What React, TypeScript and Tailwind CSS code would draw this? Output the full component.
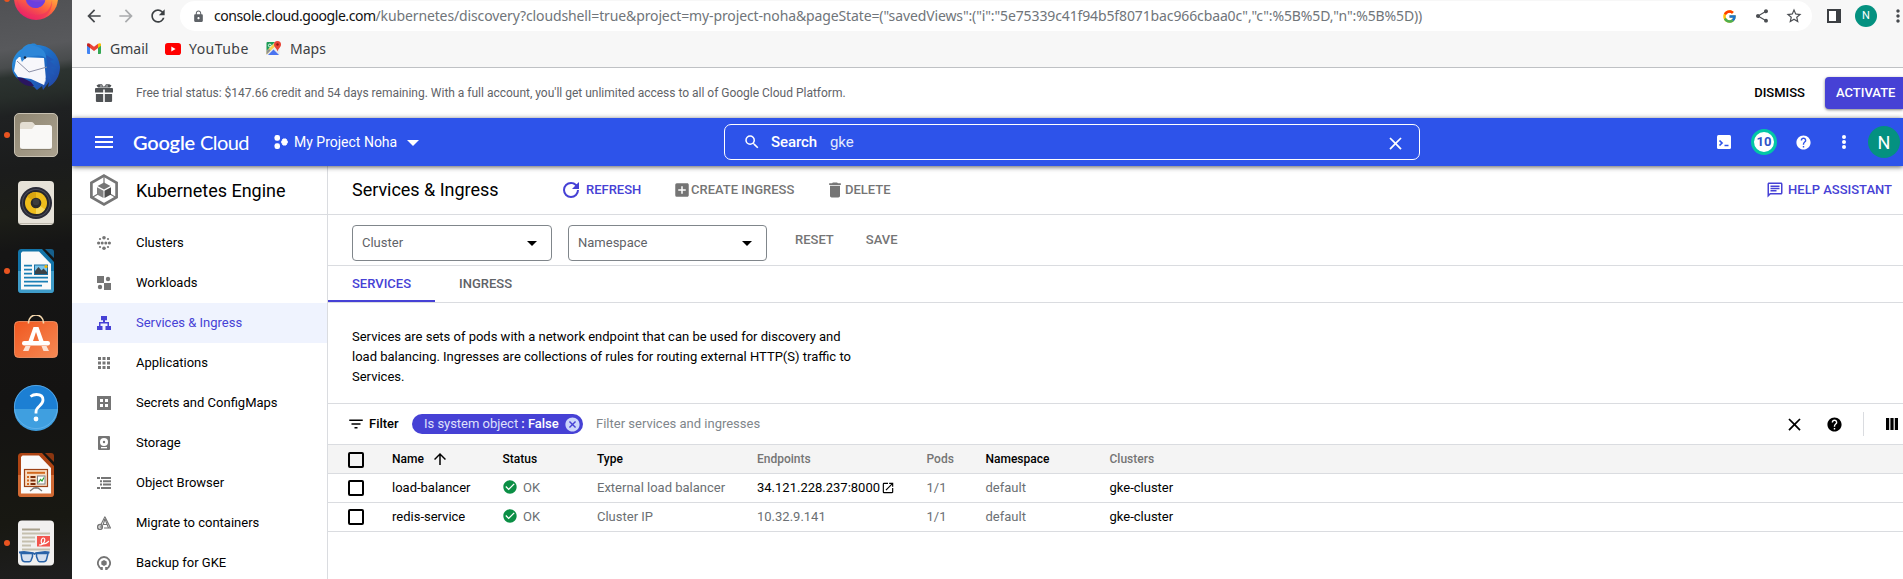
import React from 'react';
import type { ReactNode } from 'react';
import {
  MdAddBox, MdArrowBack, MdArrowForward, MdArrowUpward, MdCancel, MdCheckCircle, MdClose,
  MdDelete, MdFilterList, MdHelp, MdLock, MdMenu, MdMoreVert, MdOpenInNew, MdOutlineChat, MdRefresh,
  MdSearch, MdShare, MdStarBorder,
} from 'react-icons/md';
import { FcGoogle } from 'react-icons/fc';

/* ---------- Dock ---------- */

const Art = ({ children }: { children: ReactNode }) => (
  <svg width="48" height="48" viewBox="0 0 48 48" className="block">{children}</svg>
);

const Firefox = () => (
  <Art>
    <defs>
      <linearGradient id="ff" x1="0.8" y1="0" x2="0.3" y2="1">
        <stop offset="0.2" stopColor="#ffcf3f" />
        <stop offset="0.6" stopColor="#ff6a3c" />
        <stop offset="1" stopColor="#e5176f" />
      </linearGradient>
    </defs>
    <circle cx="24" cy="23" r="22" fill="url(#ff)" />
    <path d="M5 24c2 10 9 16 19 16s15-6 16-15c1 12-7 19-16 19S5 36 5 24z" fill="#f0305f" opacity="0.55" />
    <circle cx="23.500" cy="23" r="10" fill="#7a45d8" />
    <path d="M14 20c2 6 9 8 19 6-2 5-5 7-9.500 7-6 0-10-6-9.500-13z" fill="#6a3fe0" />
  </Art>
);

const Thunderbird = () => (
  <Art>
    <defs>
      <linearGradient id="tb" x1="0" y1="0" x2="1" y2="1">
        <stop offset="0" stopColor="#2f9be6" />
        <stop offset="0.5" stopColor="#1d6bc4" />
        <stop offset="1" stopColor="#2440a0" />
      </linearGradient>
    </defs>
    <path d="M19 1c3-1 5 0 6 1 12 0 22 9 23 22 0 9-5 17-12 20l1-5-6 8-1-4-5 4-3-3-9-5C5 37 0 31 0 24 0 16 4 9 10 6c2-3 5-5 9-5z" fill="url(#tb)" />
    <path d="M4 17l3-3 25 1 2 22-2 5-13-6-13-2-4-6z" fill="#f7f7fb" />
    <path d="M5 18l12 11 18-5" fill="none" stroke="#8d91a8" strokeWidth="1" />
    <path d="M10 8c3-5 8-7 12-5 8 1 12 6 12 12-4-3-8-3-13-2-5 0-8 2-11 6-2-4-2-8 0-11z" fill="#2d86d8" />
    <path d="M34 12l8 5-4 1 6 6-5 0 4 8-6-2 2 7-5-3-2 8c4-10 4-20 2-30z" fill="#2258b6" />
    <circle cx="13" cy="14.500" r="1.200" fill="#17243a" />
    <path d="M5 34l6 1 8 4 3 4C14 44 8 40 5 34z" fill="#2a1560" />
  </Art>
);

const Files = () => (
  <Art>
    <defs>
      <linearGradient id="fl" x1="0" y1="0" x2="1" y2="1">
        <stop offset="0" stopColor="#8f8672" />
        <stop offset="1" stopColor="#aba28f" />
      </linearGradient>
    </defs>
    <rect x="2.500" y="2.500" width="43" height="43" rx="4.500" fill="url(#fl)" stroke="#c8c1b2" />
    <path d="M8 14a3 3 0 013-3h8.500a3 3 0 012 1l2 2.500H36v9H8z" fill="#e3ddd2" />
    <path d="M8 18h12l3-4h14.500a2.500 2.500 0 012.500 2.500v19a2.500 2.500 0 01-2.500 2.500h-27A2.500 2.500 0 018 35.500z" fill="#f9f8f6" />
    <path d="M9 38.400h30" stroke="#7d7564" strokeWidth="0.800" />
  </Art>
);

const Speaker = () => (
  <Art>
    <rect x="6" y="2" width="36" height="44" rx="4" fill="#e6e2d8" />
    <path d="M7 44.500h34" stroke="#bdb8ac" strokeWidth="1" />
    <circle cx="24" cy="24" r="16" fill="#292a36" />
    <circle cx="24" cy="24" r="14" fill="#4b4c59" />
    <circle cx="24" cy="24" r="13" fill="#26262c" />
    <circle cx="24" cy="24" r="11" fill="#efbd1c" />
    <path d="M24 24L15 17.500A11 11 0 0124 13z" fill="#d9a510" />
    <path d="M24 24l9 6.500A11 11 0 0124 35z" fill="#f8d95c" />
    <circle cx="24" cy="24" r="5.300" fill="#2b2b2b" />
    <circle cx="24" cy="23" r="3.200" fill="#3d3d3d" />
  </Art>
);

const Writer = () => (
  <Art>
    <path d="M9.500 2H30l12 13v27.500a3.500 3.500 0 01-3.500 3.500h-29A3.500 3.500 0 016 42.500v-37A3.500 3.500 0 019.500 2z" fill="#1374a8" />
    <path d="M6 24h36v18.500a3.500 3.500 0 01-3.500 3.500h-29A3.500 3.500 0 016 42.500z" fill="#3f9cc9" />
    <path d="M10.500 4.500H27L39 17v25.500H9V6z" fill="#fafafa" />
    <path d="M33 2h6a3 3 0 013 3v6z" fill="#16608c" />
    <path d="M12 18.700h8M12 22.700h8M12 26.700h8M12 30.700h24M12 34.700h24M12 38.700h18" stroke="#1a7fb5" strokeWidth="1.800" />
    <rect x="22.500" y="18" width="13" height="9.500" fill="#79c4ea" stroke="#1a6f9f" strokeWidth="1" />
    <path d="M23 27v-3l3.500-4 3 3.500 2-2 3.500 3.500v2z" fill="#3c4247" />
    <circle cx="34" cy="19.500" r="1.600" fill="#f4b400" />
  </Art>
);

const Software = () => (
  <Art>
    <defs>
      <linearGradient id="sw" x1="0" y1="0" x2="1" y2="1">
        <stop offset="0" stopColor="#f0571f" />
        <stop offset="1" stopColor="#f58a55" />
      </linearGradient>
    </defs>
    <rect x="2.500" y="6.500" width="43" height="36" rx="4" fill="url(#sw)" stroke="#fb9a6c" strokeWidth="0.800" />
    <path d="M16.500 8.500v-1a7.500 7.500 0 0115 0v1" fill="none" stroke="#f6d9ae" strokeWidth="1.600" />
    <path d="M21.500 12h5l5 14h-4.500L24 17l-3 9h-4.500z" fill="#fff" />
    <rect x="10" y="26" width="28" height="4.500" rx="2.200" fill="#fff" />
    <path d="M13.500 31h5L16.500 36H11zM29.500 31h5l2.500 5h-5.500z" fill="#fbe3d6" />
  </Art>
);

const HelpDock = () => (
  <Art>
    <circle cx="24" cy="24" r="22" fill="#1c7fd3" />
    <path d="M2 26a22 22 0 0044 0z" fill="#3f9fe0" />
    <circle cx="24" cy="24" r="21.600" fill="none" stroke="#6bb8ee" strokeWidth="0.700" />
    <path d="M18.500 13.500c2-1.500 4-2 6-2 4 0 6.500 2 6.500 5.500 0 6-7 6-7 12v1.500" fill="none" stroke="#fff" strokeWidth="2.800" />
    <circle cx="24" cy="36" r="2.400" fill="#fff" />
  </Art>
);

const Impress = () => (
  <Art>
    <path d="M9.500 2H30l12 13v27.500a3.500 3.500 0 01-3.500 3.500h-29A3.500 3.500 0 016 42.500v-37A3.500 3.500 0 019.500 2z" fill="#ae4413" />
    <path d="M6 24h36v18.500a3.500 3.500 0 01-3.500 3.500h-29A3.500 3.500 0 016 42.500z" fill="#d06a34" />
    <path d="M10.500 4.500H27L39 17v25.500H9V6z" fill="#fafafa" />
    <path d="M33 2h6a3 3 0 013 3v6z" fill="#8a3610" />
    <rect x="12.500" y="18.500" width="23" height="17" fill="#f8ddc2" stroke="#9c4216" strokeWidth="1.200" />
    <path d="M15 21.800h18" stroke="#d2691e" strokeWidth="2" />
    <path d="M15 26h2M15 29.500h2M15 33h2" stroke="#d2691e" strokeWidth="2" />
    <path d="M18.500 26h5M18.500 29.500h5M18.500 33h5" stroke="#7a2c0a" strokeWidth="2" />
    <rect x="25.500" y="25" width="7.500" height="8" fill="#fff" stroke="#7c8288" strokeWidth="1" />
    <path d="M26.500 31.500l2-3 1.500 1.500 2-3.500" fill="none" stroke="#2fa32f" strokeWidth="1.200" />
    <path d="M24 36v1.500M18 40l4-3h4l4 3" fill="none" stroke="#777" strokeWidth="1.300" />
  </Art>
);

const Reader = () => (
  <Art>
    <rect x="6" y="1.500" width="36" height="45" rx="4" fill="#f1f0ef" />
    <path d="M10 10.500h18" stroke="#a8a18d" strokeWidth="2" />
    <path d="M10 14.500h28M10 18.500h13M10 22.500h13M10 26.500h9M10 30.500h28" stroke="#c5bfae" strokeWidth="2" />
    <rect x="25" y="17" width="13" height="10.500" fill="#f2554d" />
    <path d="M27 26c6 0 7-7 4.500-7s-3.500 6 0 6 4-2 5.500-3" fill="none" stroke="#fff" strokeWidth="1.200" />
    <path d="M7 33.500l5-.5 9 1 1.500 1 1.500-1 9-1 4.500.5" fill="none" stroke="#2a63a8" strokeWidth="1.800" />
    <path d="M9 34.500h11.500v3l-1.500 4a2 2 0 01-2 1.200h-4a3 3 0 01-3-2.200zM24.500 34.500H36l-1.500 6a3 3 0 01-3 2.200H28a2 2 0 01-2-1.200l-1.500-4z" fill="#d5e0ef" stroke="#2a63a8" strokeWidth="1.500" />
  </Art>
);

const dock: { Icon: () => ReactNode; running?: boolean }[] = [
  { Icon: Firefox, running: true },
  { Icon: Thunderbird },
  { Icon: Files, running: true },
  { Icon: Speaker },
  { Icon: Writer, running: true },
  { Icon: Software },
  { Icon: HelpDock },
  { Icon: Impress },
  { Icon: Reader, running: true },
];

const Dock = () => (
  <aside className="h-[579px] w-[72px] shrink-0 overflow-hidden bg-[linear-gradient(172deg,#505154_0px,#58595c_50px,#494c4d_68px,#2c3330_78px,#272d2a_98px,#1f2122_116px,#1b1c1c_170px,#1d1e18_215px,#151515_250px,#141312_400px,#181812_520px,#1e1e1e_579px)]">
    <div className="-mt-[35px] flex flex-col">
      {dock.map(({ Icon, running }, i) => (
        <div key={i} className="flex h-[68px] shrink-0 items-center">
          <span className="flex w-3 justify-center pl-0.5">
            {running && <span className="size-1.5 rounded-full bg-[#e95420]" />}
          </span>
          <Icon />
        </div>
      ))}
    </div>
  </aside>
);

/* ---------- Browser chrome ---------- */

const GmailIcon = () => (
  <svg width="14" height="11" viewBox="0 0 14 11">
    <path d="M0 1.500V10a1 1 0 001 1h2V4z" fill="#4285f4" />
    <path d="M14 1.500V10a1 1 0 01-1 1h-2V4z" fill="#34a853" />
    <path d="M11 0.800V5l3-2.200V1.500C14 0 12.300-.3 11 .8z" fill="#fbbc04" />
    <path d="M3 5V0.800l4 3 4-3V5L7 8z" fill="#ea4335" />
    <path d="M0 1.500v1.300L3 5V0.800C1.700-.3 0 0 0 1.500z" fill="#c5221f" />
  </svg>
);

const YouTubeIcon = () => (
  <svg width="16" height="12" viewBox="0 0 16 12">
    <rect width="16" height="12" rx="2.800" fill="#f00" />
    <path d="M6.300 3.500v5L10.600 6z" fill="#fff" />
  </svg>
);

const MapsIcon = () => (
  <svg width="16" height="15" viewBox="0 0 16 15">
    <rect x="0.500" y="1" width="13" height="13" rx="1" fill="#e8eaed" />
    <path d="M.5 2a1 1 0 011-1H9L.5 10z" fill="#1e9d57" />
    <path d="M2 14l5.500-5.500L13 14z" fill="#4a74f0" />
    <path d="M.5 10L8 2.500l2 2L.5 13.500z" fill="#fbd04b" />
    <path d="M.5 13.500V10L3 8l1.500 1.500z" fill="#8b9097" />
    <path d="M11.500 0a3.500 3.500 0 013.500 3.500c0 2.500-2.500 3.500-3.500 7-1-3.500-3.500-4.500-3.500-7A3.500 3.500 0 0111.500 0z" fill="#ea4335" />
    <circle cx="11.500" cy="3.500" r="1.200" fill="#8c1a12" />
    <circle cx="3.800" cy="4.500" r="1.400" fill="none" stroke="#fff" strokeWidth="0.900" />
  </svg>
);

const Chrome = () => (
  <div className="h-[68px] border-b border-[#bfc1c4] bg-[#f7f7f7] font-['Noto_Sans',sans-serif]">
    <div className="flex h-8 items-center pl-3">
      <MdArrowBack size={20} className="shrink-0 text-[#46494d]" />
      <MdArrowForward size={20} className="ml-3 shrink-0 text-[#a9abad]" />
      <MdRefresh size={20} className="ml-3 shrink-0 text-[#3c4043]" />
      <div className="ml-3 flex h-[30px] w-[1632px] shrink-0 items-center rounded-full bg-white pl-3">
        <MdLock size={13} className="text-[#5f6368]" />
        <div className="ml-[9px] flex whitespace-pre pb-px text-[14px] leading-none">
          <span className="w-[161.500px] tracking-[-0.42px] text-[#111]">console.cloud.google.com</span>
          <span className="tracking-[-0.123px] text-[#70757a]">
            {'/kubernetes/discovery?cloudshell=true&project=my-project-noha&pageState=("savedViews":("i":"5e75339c41f94b5f8071bac966cbaa0c","c":%5B%5D,"n":%5B%5D))'}
          </span>
        </div>
        <div className="ml-auto flex items-center pr-[9px]">
          <FcGoogle size={15} />
          <MdShare size={16} className="ml-[17px] text-[#4b4e52]" />
          <MdStarBorder size={18} className="ml-[15px] text-[#4b4e52]" />
        </div>
      </div>
      <div className="ml-[15px] h-3.5 w-3.5 shrink-0 border-2 border-r-[5px] border-[#3c3f43] bg-white" />
      <div className="ml-[14px] flex size-[22px] shrink-0 items-center justify-center rounded-full bg-[#049180] font-[Roboto] text-[11px] text-white">N</div>
      <MdMoreVert size={20} className="ml-[11px] shrink-0 text-[#46494d]" />
    </div>
    <div className="flex h-[33px] items-center pl-[15px] text-[14px] text-[#3c4043]">
      <GmailIcon />
      <span className="ml-[9px] w-[55px]">Gmail</span>
      <YouTubeIcon />
      <span className="ml-2 w-[77px] tracking-[0.45px]">YouTube</span>
      <MapsIcon />
      <span className="ml-2">Maps</span>
    </div>
  </div>
);

/* ---------- Console header ---------- */

const GiftIcon = () => (
  <svg width="18" height="18" viewBox="0 0 18 18" fill="#4f5255">
    <path d="M1 4h16a1 1 0 011 1v3.500h-8.200V5.500H8.200v3H0V5a1 1 0 011-1zM.9 10h7.300v8H2a1.100 1.100 0 01-1.100-1.100zM9.800 10h7.300v6.900A1.100 1.100 0 0116 18H9.800z" />
    <path d="M8.900 2.900L7 .2H3.600L1.500 1.400 3 3.600h12l1.500-2.200L14.400.2H11z" />
    <path d="M5 2h2.500M10.500 2H13" stroke="#fff" strokeWidth="0.700" />
  </svg>
);

const Banner = () => (
  <div className="flex h-[50px] items-center pl-[23px]">
    <GiftIcon />
    <span className="ml-[23px] text-[12px] tracking-[-0.008px] text-[#5f6368]">
      Free trial status: $147.66 credit and 54 days remaining. With a full account, you'll get unlimited access to all of Google Cloud Platform.
    </span>
    <span className="ml-auto text-[13px] font-medium text-black">DISMISS</span>
    <div className="ml-5 flex h-8 w-[78px] shrink-0 items-center rounded-l bg-[#4641d5] pl-[11px] text-[13px] font-medium text-white shadow-[0_1px_3px_rgba(0,0,0,0.5)]">
      ACTIVATE
    </div>
  </div>
);

const Header = () => (
  <header className="relative z-10 flex h-12 items-center bg-[#2d53ea] text-white shadow-[0_1px_5px_rgba(0,0,0,0.65)]">
    <MdMenu size={24} className="ml-5 shrink-0" />
    <div className="ml-[17px] flex w-[141px] gap-[5px] font-['Lato',sans-serif] text-[20px] leading-none">
      <span className="font-semibold tracking-[-0.2px]">Google</span>
      <span className="tracking-[-0.55px]">Cloud</span>
    </div>
    <svg width="14" height="16" viewBox="0 0 14 16" className="shrink-0" fill="#fff">
      <rect x="0.500" y="1" width="5.500" height="5.800" rx="2.200" />
      <rect x="0.500" y="9.200" width="5.500" height="5.800" rx="2.200" />
      <path d="M9 5h3l1.500 3-1.500 3H9L7.500 8z" stroke="#fff" strokeWidth="1" strokeLinejoin="round" />
    </svg>
    <span className="ml-[6px] w-[113px] text-[14px]">My Project Noha</span>
    <svg width="12" height="6" viewBox="0 0 12 6" fill="#fff" className="mt-0.5"><path d="M0 0h12L6 6z" /></svg>
    <div className="ml-[305px] flex h-9 w-[696px] shrink-0 items-center rounded-[7px] border border-white pl-[18px]">
      <MdSearch size={18} />
      <span className="ml-2.5 text-[15px] font-medium tracking-[-0.1px]">Search</span>
      <span className="ml-[13px] text-[15px] text-[#e4eafd]">gke</span>
      <MdClose size={21} className="ml-auto mr-[13px] mt-0.5" />
    </div>
    <div className="ml-[297px] flex items-center">
      <svg width="14" height="14" viewBox="0 0 14 14">
        <rect width="14" height="14" rx="1.500" fill="#fff" />
        <path d="M2.500 5.500L5 8l-2.500 2.500M7.500 10.500h4" fill="none" stroke="#2d53ea" strokeWidth="1.700" />
      </svg>
      <span className="ml-5 flex size-[26px] items-center justify-center rounded-full border-[3px] border-[#03c7a6] bg-white text-[13px] font-bold text-[#2d53c8]">10</span>
      <MdHelp size={17} className="ml-[18px]" />
      <svg width="4" height="14" viewBox="0 0 4 14" fill="#fff" className="ml-[30px]">
        <circle cx="2" cy="2" r="2" /><circle cx="2" cy="7" r="2" /><circle cx="2" cy="12" r="2" />
      </svg>
      <span className="ml-[22px] flex size-8 items-center justify-center rounded-full bg-[#049180] text-[18px]">N</span>
    </div>
  </header>
);

/* ---------- Sidebar ---------- */

const Nav14 = ({ children }: { children: ReactNode }) => (
  <svg width="14" height="14" viewBox="0 0 14 14" fill="currentColor">{children}</svg>
);

const nav: { label: string; icon: ReactNode; active?: boolean }[] = [
  {
    label: 'Clusters',
    icon: (
      <Nav14>
        <circle cx="7" cy="1.800" r="1.800" /><circle cx="7" cy="12.200" r="1.800" />
        <circle cx="1.600" cy="7" r="1.600" /><circle cx="12.400" cy="7" r="1.600" />
        <circle cx="5.200" cy="7" r="1.500" /><circle cx="8.800" cy="7" r="1.500" />
        <circle cx="3" cy="3" r="1.100" /><circle cx="11" cy="3" r="1.100" /><circle cx="3" cy="11" r="1.100" /><circle cx="11" cy="11" r="1.100" />
      </Nav14>
    ),
  },
  {
    label: 'Workloads',
    icon: <Nav14><path d="M0 0h7v7H0zM7 7h7v7H7z" /><circle cx="11" cy="3" r="2.200" /><circle cx="3" cy="11" r="2.200" /></Nav14>,
  },
  {
    label: 'Services & Ingress',
    active: true,
    icon: <Nav14><path d="M4 0h6v4.200H8V6h4v4h2v4H8.500v-4h2V7.500h-7V10h2v4H0v-4h2V6h4V4.200H4z" /></Nav14>,
  },
  {
    label: 'Applications',
    icon: <Nav14><path d="M1 1h3v3H1zM5.500 1h3v3h-3zM10 1h3v3h-3zM1 5.500h3v3H1zM5.500 5.500h3v3h-3zM10 5.500h3v3h-3zM1 10h3v3H1zM5.500 10h3v3h-3zM10 10h3v3h-3z" /></Nav14>,
  },
  {
    label: 'Secrets and ConfigMaps',
    icon: <Nav14><path fillRule="evenodd" d="M0 0h14v14H0zM3 3v3h3V3zM8 3v3h3V3zM3 8v3h3V8zM8 8v3h3V8z" /></Nav14>,
  },
  {
    label: 'Storage',
    icon: (
      <Nav14>
        <rect x="1" y="0" width="12" height="14" rx="1" />
        <circle cx="7" cy="6" r="4" fill="#fff" /><circle cx="7" cy="6" r="1.200" />
        <path d="M4 11h6v1.300H4z" fill="#fff" />
      </Nav14>
    ),
  },
  {
    label: 'Object Browser',
    icon: <Nav14><path d="M0 1h3v2H0zM4 1h10v2H4zM3 4.300h2v2H3zM6 4.300h8v2H6zM3 7.600h2v2H3zM6 7.600h8v2H6zM0 11h3v2H0zM4 11h10v2H4z" /></Nav14>,
  },
  {
    label: 'Migrate to containers',
    icon: (
      <Nav14>
        <path d="M8 1L13.500 12H7" fill="none" stroke="currentColor" strokeWidth="1.200" />
        <path d="M8 .5L4 8.500M8 3l-2 6M8 3l3.500 9M6.500 8.500h4" fill="none" stroke="currentColor" strokeWidth="1.100" />
        <circle cx="3" cy="11" r="2.400" fill="none" stroke="currentColor" strokeWidth="1.500" />
        <path d="M2.500 11h3" fill="none" stroke="currentColor" strokeWidth="1.300" />
      </Nav14>
    ),
  },
  {
    label: 'Backup for GKE',
    icon: (
      <Nav14>
        <path d="M4.800 12.800A6.100 6.100 0 119.200 12.800" fill="none" stroke="currentColor" strokeWidth="1.800" />
        <path d="M3.500 11h2.300v3H3.500zM8.200 11h2.300v3H8.200z" />
        <path d="M7 4l2.700 1.500v3L7 10 4.300 8.500v-3z" />
      </Nav14>
    ),
  },
];

const KubernetesIcon = () => (
  <svg width="28" height="32" viewBox="0 0 28 32">
    <path d="M14 1.600l12.600 7.200v14.400L14 30.400 1.400 23.200V8.800z" fill="none" stroke="#757575" strokeWidth="2.700" />
    <path d="M14 2v7M2 23.500l6-3.500M26 23.500L20 20" stroke="#757575" strokeWidth="1.200" />
    <path d="M14 8.500l6.500 3.600L14 15.600l-6.500-3.500z" fill="#757575" />
    <path d="M7 13.200l6.500 3.500v7.300L7 20.500z" fill="#808080" />
    <path d="M21 13.200l-6.500 3.500v7.300l6.500-3.500z" fill="#4f4f4f" />
  </svg>
);

const Sidebar = () => (
  <nav className="w-64 shrink-0 border-r border-[#dadce0]">
    <div className="flex h-[49px] items-center border-b border-[#dadce0] pl-[18px]">
      <KubernetesIcon />
      <span className="ml-[18px] text-[18px] text-black">Kubernetes Engine</span>
    </div>
    <div className="pt-2">
      {nav.map((n) => (
        <div
          key={n.label}
          className={
            n.active
              ? 'flex h-10 items-center bg-[#eff3fe] pl-[25px] text-[#4641d5]'
              : 'flex h-10 items-center pl-[25px] text-[#757575]'
          }
        >
          {n.icon}
          <span className={n.active ? 'ml-[25px] text-[13px]' : 'ml-[25px] text-[13px] text-black'}>{n.label}</span>
        </div>
      ))}
    </div>
  </nav>
);

/* ---------- Main ---------- */

const Select = ({ label }: { label: string }) => (
  <div className="flex h-9 items-center justify-between rounded border border-[#80868b] pl-[9px] pr-[14px] text-[13px] text-[#5f6368]">
    {label}
    <svg width="10" height="5" viewBox="0 0 10 5" className="text-black" fill="currentColor"><path d="M0 0h10L5 5z" /></svg>
  </div>
);

const Checkbox = () => <span className="block size-4 rounded-[2px] border-2 border-black" />;

const services = [
  { name: 'load-balancer', type: 'External load balancer', endpoint: '34.121.228.237:8000', link: true },
  { name: 'redis-service', type: 'Cluster IP', endpoint: '10.32.9.141', link: false },
];

const Main = () => (
  <main className="min-w-0 flex-1">
    <div className="flex h-[49px] items-center border-b border-[#dadce0] pl-6 text-[13px] font-medium text-[#757575]">
      <h1 className="w-[211px] pb-px text-[18px] font-normal tracking-[-0.03px] text-black">Services &amp; Ingress</h1>
      <span className="flex w-[110px] items-center text-[#4641d5]">
        <svg width="16" height="16" viewBox="4 4 16 16" fill="currentColor">
          <path d="M17.650 6.350A7.960 7.960 0 0012 4a8 8 0 108 8h-2a6 6 0 11-6-6c1.660 0 3.140.69 4.220 1.780L13 11h7V4z" />
        </svg>
        <span className="ml-[7px]">REFRESH</span>
      </span>
      <span className="flex w-[152px] items-center"><MdAddBox size={18} className="shrink-0" /><span className="whitespace-nowrap">CREATE INGRESS</span></span>
      <span className="flex items-center"><MdDelete size={20} /><span>DELETE</span></span>
      <span className="ml-auto flex items-center pr-[11px] text-[#4641d5]"><MdOutlineChat size={18} className="mr-1" />HELP ASSISTANT</span>
    </div>

    <div className="flex h-[51px] items-start border-b border-[#dadce0] pl-6 pt-2.5 text-[13px] font-medium text-[#757575]">
      <div className="grid grid-cols-[200px_199px] gap-4 font-normal"><Select label="Cluster" /><Select label="Namespace" /></div>
      <span className="ml-7 mt-[5px]">RESET</span>
      <span className="ml-8 mt-[5px]">SAVE</span>
    </div>

    <div className="flex h-[37px] border-b border-[#dadce0] text-[13px] font-medium">
      <div className="flex h-9 w-[107px] items-center justify-center border-b-2 border-[#4641d5] pt-0.5 text-[#4641d5]">SERVICES</div>
      <div className="flex h-9 w-[101px] items-center justify-center border-b-2 border-transparent pt-0.5 text-[#5f6368]">INGRESS</div>
    </div>

    <p className="h-[100px] pl-6 pt-6 text-[13px] leading-5 text-black">
      Services are sets of pods with a network endpoint that can be used for discovery and<br />
      load balancing. Ingresses are collections of rules for routing external HTTP(S) traffic to<br />
      Services.
    </p>

    <div className="flex h-[42px] items-center border-y border-[#dadce0] pl-[19px] text-[13px]">
      <MdFilterList size={18} className="text-black" />
      <span className="ml-1 w-[43px] font-medium text-black">Filter</span>
      <div className="flex h-5 w-[171px] items-center rounded-full bg-[#4641d5] pl-3 text-white">
        <span className="whitespace-pre tracking-[-0.03px] text-[#dfe0fb]">Is system object <b className="font-medium text-white">: False</b></span>
        <MdCancel size={17} className="ml-auto mr-[2px] text-[#ccd6fb]" />
      </div>
      <span className="ml-[13px] text-[#80868b]">Filter services and ingresses</span>
      <MdClose size={21} className="ml-auto text-black" />
      <MdHelp size={17} className="ml-[21px] text-black" />
      <span className="ml-5 h-6 w-px bg-[#dadce0]" />
      <svg width="12" height="12" viewBox="0 0 12 12" className="ml-[22px] mr-[5px]"><path d="M0 0h3.200v12H0zM4.400 0h3.200v12H4.400zM8.800 0H12v12H8.800z" /></svg>
    </div>

    <div className="grid h-[29px] grid-cols-[44px_110.500px_94.500px_160px_169.500px_59px_124px_1fr] items-center border-b border-[#dadce0] bg-[#f4f4f4] pl-5 text-[12px] font-medium text-[#757575]">
      <span className="pt-0.5"><Checkbox /></span>
      <span className="flex items-center gap-[7px] text-black">Name <MdArrowUpward size={18} /></span>
      <span className="text-black">Status</span>
      <span className="text-black">Type</span>
      <span>Endpoints</span>
      <span>Pods</span>
      <span className="text-black">Namespace</span>
      <span>Clusters</span>
    </div>
    {services.map((s) => (
      <div
        key={s.name}
        className="grid h-[29px] grid-cols-[44px_110px_95px_160px_169.500px_59px_124px_1fr] items-center border-b border-[#dadce0] pl-5 text-[13px] text-[#6b6f73]"
      >
        <Checkbox />
        <span className="text-black">{s.name}</span>
        <span className="flex items-center"><MdCheckCircle size={16} className="-mt-0.5 text-[#0b8f45]" /><span className="ml-[5px]">OK</span></span>
        <span>{s.type}</span>
        {s.link ? (
          <span className="flex items-center text-black">{s.endpoint}<MdOpenInNew size={14} className="-mt-px ml-px" /></span>
        ) : (
          <span>{s.endpoint}</span>
        )}
        <span>1/1</span>
        <span>default</span>
        <span className="text-black">gke-cluster</span>
      </div>
    ))}
  </main>
);

export default function App() {
  return (
    <div className="flex h-[579px] w-full overflow-hidden bg-white font-['Roboto',sans-serif]">
      <Dock />
      <div className="flex min-w-0 flex-1 flex-col overflow-hidden">
        <Chrome />
        <Banner />
        <Header />
        <div className="flex min-h-0 flex-1">
          <Sidebar />
          <Main />
        </div>
      </div>
    </div>
  );
}
